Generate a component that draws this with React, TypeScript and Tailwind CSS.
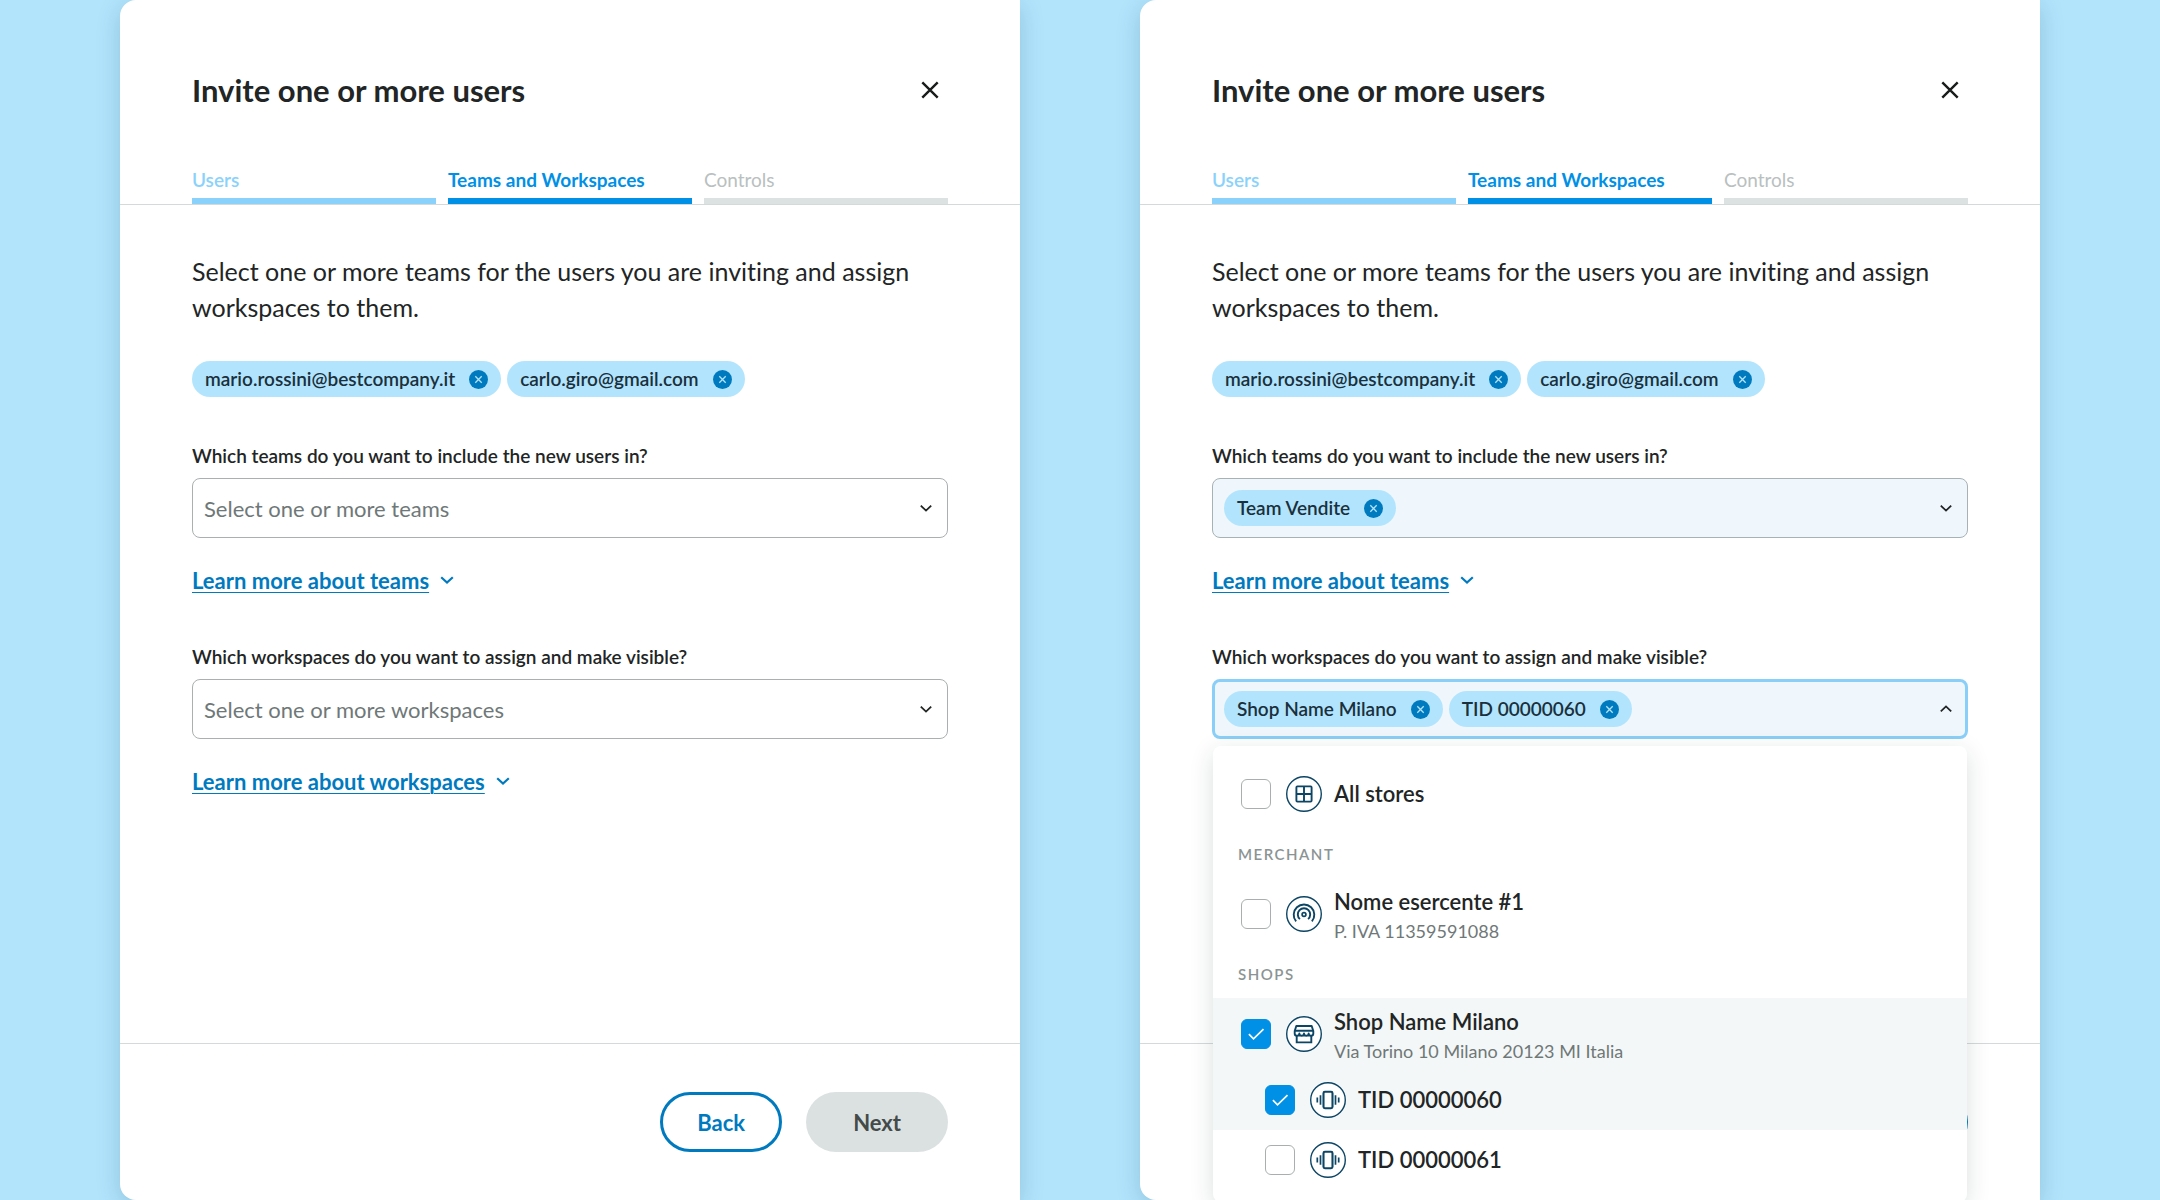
import React, { useId, useState } from "react";

type IconProps = { className?: string };

function CrossIcon({ className }: IconProps) {
  return (
    <svg viewBox="0 0 36 36" fill="none" stroke="currentColor" strokeWidth="2.4" className={className} aria-hidden="true">
      <path d="M10.3 10.3 25.7 25.7M25.7 10.3 10.3 25.7" />
    </svg>
  );
}

function RemoveIcon({ className }: IconProps) {
  return (
    <svg viewBox="0 0 19 19" fill="none" className={className} aria-hidden="true">
      <circle cx="9.5" cy="9.5" r="9.5" fill="#007abf" />
      <path d="m6.3 6.3 6.4 6.4M12.7 6.3l-6.4 6.4" stroke="#b2e5fd" strokeWidth="1.3" />
    </svg>
  );
}

function ChevronDown({ className }: IconProps) {
  return (
    <svg viewBox="0 0 20 20" fill="none" stroke="currentColor" strokeWidth="1.8" className={className} aria-hidden="true">
      <path d="m4.8 7.6 5.2 5 5.2-5" />
    </svg>
  );
}

function ChevronUp({ className }: IconProps) {
  return (
    <svg viewBox="0 0 20 20" fill="none" stroke="currentColor" strokeWidth="1.8" className={className} aria-hidden="true">
      <path d="m4.8 12.4 5.2-5 5.2 5" />
    </svg>
  );
}

function LinkChevron({ className }: IconProps) {
  return (
    <svg viewBox="0 0 20 20" fill="none" stroke="currentColor" strokeWidth="2.2" className={className} aria-hidden="true">
      <path d="m4.2 7.2 5.8 5.4 5.8-5.4" />
    </svg>
  );
}

function IconCircle({ children }: { children: React.ReactNode }) {
  return (
    <svg viewBox="-18 -18 36 36" fill="none" stroke="#0d4565" strokeWidth="1.9" className="size-9 shrink-0" aria-hidden="true">
      <circle r="17.3" fill="#ffffff" strokeWidth="1.4" />
      {children}
    </svg>
  );
}

function GridGlyph() {
  return (
    <IconCircle>
      <rect x="-7.6" y="-7.6" width="15.2" height="15.2" rx="1" />
      <path d="M0-7.6V7.6M-7.6 0H7.6" />
    </IconCircle>
  );
}

function SignalGlyph() {
  return (
    <IconCircle>
      <circle cy="0.4" r="1.9" strokeWidth="1.7" />
      <path d="M-4.1 5.1A6.2 6.2 0 1 1 4.1 5.1" />
      <path d="M-7.9 7.4A10.3 10.3 0 1 1 7.9 7.4" />
    </IconCircle>
  );
}

function ShopGlyph() {
  return (
    <IconCircle>
      <path strokeLinejoin="round" d="M-7.7-8H7.7L9.3-3V-.6a2.3 2.3 0 0 1-4.65 0 2.3 2.3 0 0 1-4.65 0 2.3 2.3 0 0 1-4.65 0 2.3 2.3 0 0 1-4.65 0V-3Z" />
      <path d="M-9-3.2H9M-7.3 1.8V8.4H7.3V1.8" />
    </IconCircle>
  );
}

function TerminalGlyph() {
  return (
    <IconCircle>
      <rect x="-4.5" y="-8.2" width="9" height="16.4" rx="1.4" strokeWidth="2.1" />
      <path strokeWidth="1.7" d="M-7.5-4.8V4.8M7.5-4.8V4.8M-10.7-2.6V2.6M10.7-2.6V2.6" />
    </IconCircle>
  );
}

function Chip({ label }: { label: string }) {
  return (
    <li className="flex h-9 items-center gap-3.5 rounded-full bg-[#b2e5fd] px-[13px] text-[19px] leading-6 font-semibold text-[#1a303c]">
      {label}
      <button type="button" aria-label={`Remove ${label}`} className="rounded-full">
        <RemoveIcon className="size-[19px]" />
      </button>
    </li>
  );
}

const fieldLabel = "block text-[19px] leading-6 font-semibold text-[#222525]";

function EmptySelect({ label, placeholder }: { label: string; placeholder: string }) {
  const id = useId();
  return (
    <>
      <label htmlFor={id} className={fieldLabel}>{label}</label>
      <div className="mt-2.5 grid items-center">
        <select id={id} defaultValue="" className="col-start-1 row-start-1 h-[60px] w-full appearance-none rounded-lg border border-[#aab0b0] bg-white px-[11px] text-[22px] text-[#6f7878]">
          <option value="">{placeholder}</option>
        </select>
        <ChevronDown className="pointer-events-none col-start-1 row-start-1 mr-3 size-5 justify-self-end text-[#222525]" />
      </div>
    </>
  );
}

function ChipSelect({ label, chips, open, children }: { label: string; chips: string[]; open?: boolean; children?: React.ReactNode }) {
  const id = useId();
  return (
    <>
      <label htmlFor={id} className={fieldLabel}>{label}</label>
      <div className="relative mt-2.5">
        <div className={open
          ? "flex h-[60px] items-center gap-1.5 rounded-lg border-3 border-[#8acff7] bg-[#eff7fd] px-[9px]"
          : "flex h-[60px] items-center gap-1.5 rounded-lg border border-[#a8b2b6] bg-[#eff7fd] px-[11px]"}>
          <ul className="flex gap-1.5">{chips.map((c) => <Chip key={c} label={c} />)}</ul>
          <input id={id} type="text" role="combobox" aria-expanded={!!open} className="h-9 min-w-0 flex-1 bg-transparent text-[22px] outline-none" />
          <button type="button" aria-label={`Toggle options: ${label}`} className="text-[#222525]">
            {open ? <ChevronUp className="size-5" /> : <ChevronDown className="size-5" />}
          </button>
        </div>
        {children}
      </div>
    </>
  );
}

function LearnMore({ children }: { children: React.ReactNode }) {
  return (
    <div className="mt-6 flex h-9 items-center gap-2 text-[22px] font-bold text-[#007abf]">
      <a href="#learn-more" className="underline decoration-1 underline-offset-3">{children}</a>
      <LinkChevron className="size-5" />
    </div>
  );
}

type OptionProps = { icon: React.ReactNode; title: string; detail?: string; defaultChecked?: boolean; nested?: boolean; tall?: boolean };

function Option({ icon, title, detail, defaultChecked = false, nested, tall }: OptionProps) {
  const [checked, setChecked] = useState(defaultChecked);
  return (
    <label className={`flex items-center ${tall ? "h-[72px]" : "h-[60px]"} ${nested ? "pl-[52px]" : "pl-7"} ${checked ? "bg-[#f4f7f7]" : "bg-white"}`}>
      <span className="grid shrink-0 place-items-center">
        <input
          type="checkbox"
          checked={checked}
          onChange={(e) => setChecked(e.target.checked)}
          className="col-start-1 row-start-1 size-[30px] appearance-none rounded-md border border-[#a9afaf] bg-white checked:border-[#0090e6] checked:bg-[#0090e6]"
        />
        {checked && (
          <svg viewBox="0 0 30 30" fill="none" stroke="#ffffff" strokeWidth="1.7" className="pointer-events-none col-start-1 row-start-1 size-[30px]" aria-hidden="true">
            <path d="m7.9 15.2 4.6 4.6 10-9.6" />
          </svg>
        )}
      </span>
      <span className="ml-[15px]">{icon}</span>
      <span className={detail ? "ml-3 flex flex-col pt-1" : "ml-3 flex flex-col"}>
        <span className="text-[22px] leading-[30px] font-semibold text-[#222525]">{title}</span>
        {detail && <span className="text-[18px] leading-7 text-[#6f7878]">{detail}</span>}
      </span>
    </label>
  );
}

function GroupHeading({ children }: { children: React.ReactNode }) {
  return <h3 className="flex h-12 items-center pl-[25px] text-[15px] font-semibold tracking-widest text-[#8b9494] uppercase">{children}</h3>;
}

function WorkspaceMenu() {
  return (
    <div className="absolute inset-x-px top-full z-10 mt-[7px] overflow-hidden rounded-lg bg-white py-3 shadow-[0_6px_24px_rgba(0,40,40,0.14)]">
      <Option tall icon={<GridGlyph />} title="All stores" />
      <GroupHeading>Merchant</GroupHeading>
      <Option tall icon={<SignalGlyph />} title="Nome esercente #1" detail="P. IVA 11359591088" />
      <GroupHeading>Shops</GroupHeading>
      <Option tall icon={<ShopGlyph />} title="Shop Name Milano" detail="Via Torino 10 Milano 20123 MI Italia" defaultChecked />
      <Option nested icon={<TerminalGlyph />} title="TID 00000060" defaultChecked />
      <Option nested icon={<TerminalGlyph />} title="TID 00000061" />
    </div>
  );
}

function InvitePanel({ nextEnabled, children }: { nextEnabled?: boolean; children: React.ReactNode }) {
  return (
    <section className="flex h-full flex-col rounded-l-2xl bg-white shadow-[0_6px_24px_rgba(0,60,100,0.2)]">
      <header className="border-b border-[#d3dada] px-[72px] pt-[72px]">
        <div className="flex h-9 items-center justify-between">
          <h1 className="text-[31px] leading-9 font-bold text-[#222525]">Invite one or more users</h1>
          <button type="button" aria-label="Close" className="text-[#1a1c1c]">
            <CrossIcon className="size-9" />
          </button>
        </div>
        <ol className="mt-[60px] grid grid-cols-3 gap-3 text-[19px] leading-6">
          <li className="border-b-6 border-[#8ad2fb] pb-1.5 font-semibold text-[#8ad2fb]">Users</li>
          <li aria-current="step" className="border-b-6 border-[#0090e6] pb-1.5 font-bold text-[#0090e6]">Teams and Workspaces</li>
          <li className="border-b-6 border-[#dbe2e1] pb-1.5 text-[#b9c0c0]">Controls</li>
        </ol>
      </header>
      <div className="flex-1 px-[72px] pt-12">
        <p className="text-[25px] leading-9 text-[#222525]">
          Select one or more teams for the users you are inviting and assign workspaces to them.
        </p>
        <ul className="mt-9 flex gap-1.5">
          <Chip label="mario.rossini@bestcompany.it" />
          <Chip label="carlo.giro@gmail.com" />
        </ul>
        {children}
      </div>
      <footer className="flex justify-end gap-6 border-t border-[#d3dada] px-[72px] py-12">
        <button type="button" className="h-[60px] rounded-full border-3 border-[#007abf] px-[34px] text-[22px] font-bold text-[#007abf]">Back</button>
        <button
          type="button"
          disabled={!nextEnabled}
          className="h-[60px] rounded-full bg-[#007abf] px-[47px] text-[22px] font-bold text-white disabled:bg-[#dbe1e1] disabled:text-[#444a4a]"
        >
          Next
        </button>
      </footer>
    </section>
  );
}

const TEAMS_LABEL = "Which teams do you want to include the new users in?";
const WORKSPACES_LABEL = "Which workspaces do you want to assign and make visible?";

export default function App() {
  return (
    <main className="grid h-screen grid-cols-2 gap-[120px] overflow-hidden bg-[#b2e4fc] px-[120px] font-['Lato',sans-serif] [font-variant-ligatures:none]">
      <InvitePanel>
        <div className="mt-[47px]">
          <EmptySelect label={TEAMS_LABEL} placeholder="Select one or more teams" />
          <LearnMore>Learn more about teams</LearnMore>
        </div>
        <div className="mt-[47px]">
          <EmptySelect label={WORKSPACES_LABEL} placeholder="Select one or more workspaces" />
          <LearnMore>Learn more about workspaces</LearnMore>
        </div>
      </InvitePanel>
      <InvitePanel nextEnabled>
        <div className="mt-[47px]">
          <ChipSelect label={TEAMS_LABEL} chips={["Team Vendite"]} />
          <LearnMore>Learn more about teams</LearnMore>
        </div>
        <div className="mt-[47px]">
          <ChipSelect label={WORKSPACES_LABEL} chips={["Shop Name Milano", "TID 00000060"]} open>
            <WorkspaceMenu />
          </ChipSelect>
        </div>
      </InvitePanel>
    </main>
  );
}
